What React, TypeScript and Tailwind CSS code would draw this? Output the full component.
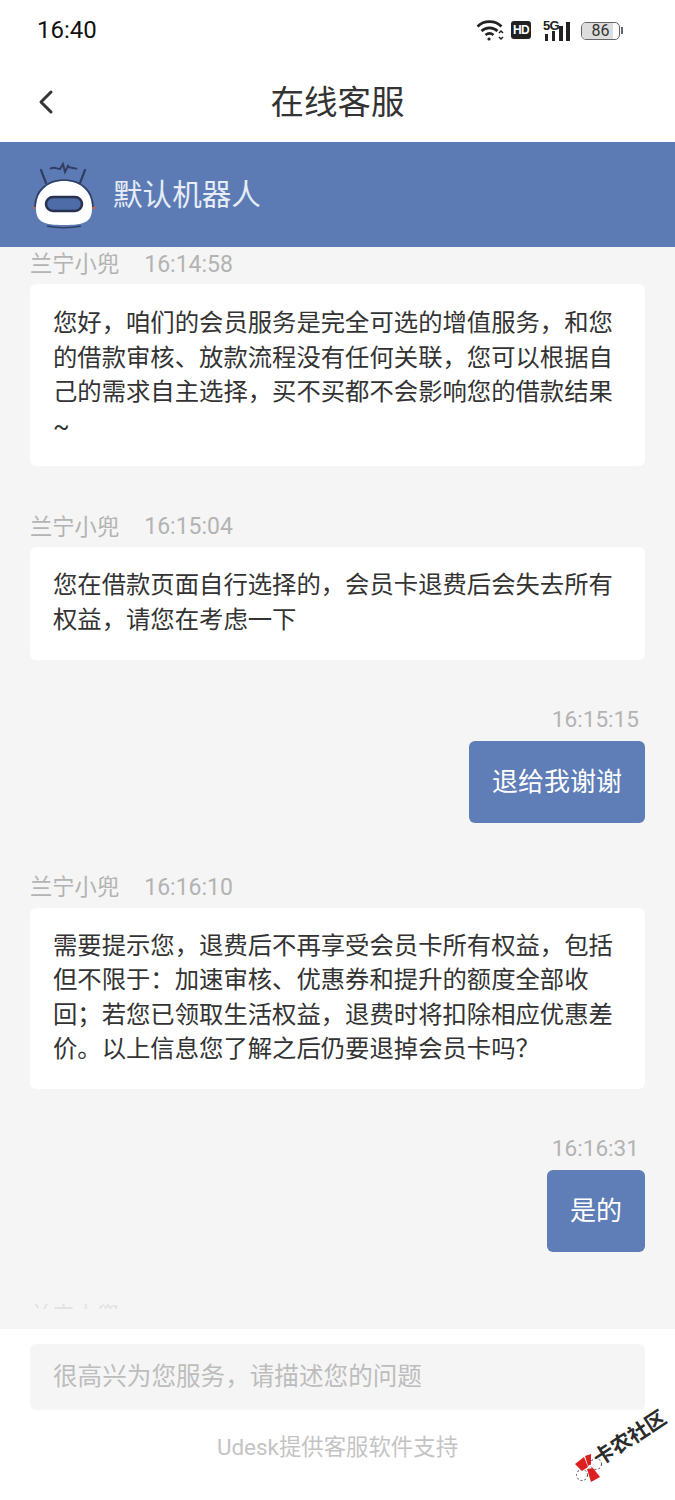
import { ChevronLeft } from "lucide-react";

const CJK = "font-['Roboto','Noto_Sans_CJK_SC',sans-serif]";

const BotAvatar = () => (
  <svg width="66" height="70" viewBox="0 0 66 70" fill="none">
    <path d="M10 10 L15 23 M54 10 L49 23" stroke="#2f3f63" strokeWidth="2.2" strokeLinecap="round" />
    <path d="M19 9 C23 6 26 9 29 9 L32 4 L34 12 L37 6 C39 9 43 7 46 9" stroke="#2f3f63" strokeWidth="2" />
    <rect x="1" y="46" width="5" height="3" fill="#8c6f80" />
    <rect x="60" y="46" width="5" height="3" fill="#a86a70" />
    <path d="M5 48 C5 31 17 21 33 21 C49 21 61 31 61 48 C61 62 54 65 33 65 C12 65 5 62 5 48 Z" fill="#fff" />
    <path d="M4 47 C4 30 17 20 33 20 C49 20 62 30 62 47" stroke="#2f3f63" strokeWidth="1.6" />
    <path d="M16 66 C26 68 40 68 50 66" stroke="#2f3f63" strokeWidth="1.6" />
    <rect x="15" y="37" width="36" height="14" rx="7" fill="#4d6ca8" stroke="#26324f" strokeWidth="2.5" />
  </svg>
);

const WifiIcon = () => (
  <svg width="28" height="24" viewBox="0 0 28 24" fill="none" stroke="#222" strokeWidth="2.6">
    <path d="M1.5 8.5 C8 2 19 2 25.5 8.5" />
    <path d="M5.5 13 C10 8.8 17 8.8 21.5 13" />
    <path d="M9.5 17 C12 15 15 15 17.5 17" />
    <circle cx="13" cy="21" r="1.6" fill="#222" stroke="none" />
    <path d="M23 15 L25 13 L27 15 M23 19 L25 21 L27 19" strokeWidth="1.5" />
  </svg>
);

const StatusBar = () => (
  <div className="flex h-[60px] items-center justify-between pl-[37px] pr-[52px] bg-white">
    <span className="text-[24px] leading-none text-[#111] font-['Roboto',sans-serif]">16:40</span>
    <div className="flex items-center">
      <WifiIcon />
      <span className="ml-[7px] flex h-[18px] w-[20px] items-center justify-center rounded-[3px] bg-[#222] text-[12px] font-bold leading-none tracking-tighter text-white font-['Liberation_Sans',sans-serif]">
        HD
      </span>
      <div className="relative ml-[12px] mt-[1px] flex h-[20px] w-[29px] items-end gap-[3.5px] pl-[1.5px]">
        <span className="absolute left-0 top-[-2px] text-[13px] font-bold leading-none tracking-tighter text-[#222] font-['Liberation_Sans',sans-serif]">5G</span>
        <i className="block h-[7px] w-[3.5px] bg-[#222]" />
        <i className="block h-[10px] w-[3.5px] bg-[#222]" />
        <i className="block h-[15px] w-[4px] bg-[#222]" />
        <i className="block h-[19px] w-[4px] bg-[#222]" />
      </div>
      <div className="ml-[9px] mt-[1px] flex items-center">
        <div className="relative flex h-[18px] w-[39px] items-center justify-center overflow-hidden rounded-[5px] border-[1.5px] border-[#666]">
          <div className="absolute inset-y-0 left-0 w-[31px] bg-[#ddd]" />
          <span className="relative text-[16px] leading-none text-[#333] font-['Roboto',sans-serif]">86</span>
        </div>
        <i className="ml-[1px] block h-[7px] w-[2px] bg-[#666]" />
      </div>
    </div>
  </div>
);

const Incoming = ({ time, lines, mt, first }: { time: string; lines: string[]; mt: string; first?: boolean }) => (
  <div className={mt}>
    <div className="flex h-[24px] items-center pt-[1px] text-[22.3px] leading-none text-[#b3b3b3]">
      <span>兰宁小兜</span>
      <span className="ml-[25px] text-[23px]">{time}</span>
    </div>
    <div
      className={`rounded-[6px] bg-white pl-[23px] pb-[22px] text-[24.35px] leading-[34.6px] text-[#333] ${
        first ? "mt-[8px] pt-[22px]" : "mt-[9px] pt-[21px]"
      }`}
    >
      {lines.map((l) => (
        <div key={l} className="whitespace-nowrap">{l}</div>
      ))}
    </div>
  </div>
);

const Outgoing = ({ time, text, w, mt }: { time: string; text: string; w: string; mt: string }) => (
  <div className={`flex flex-col items-end ${mt}`}>
    <div className="flex h-[24px] items-center pt-[1px] pr-[6px] text-[22.6px] leading-none text-[#b3b3b3]">{time}</div>
    <div className={`mt-[9px] flex h-[82px] items-center justify-center rounded-[6px] bg-[#5f7db7] pt-[2px] text-[26px] text-white ${w}`}>
      {text}
    </div>
  </div>
);

export default function App() {
  return (
    <div className={`relative flex h-[1500px] w-[675px] flex-col overflow-hidden bg-white ${CJK}`}>
      <StatusBar />

      <div className="relative flex h-[82px] items-center justify-center bg-white pt-[5px]">
        <ChevronLeft size={40} strokeWidth={1.8} className="absolute left-[26px] top-[22px] text-[#333]" />
        <span className="text-[33.5px] text-[#333]">在线客服</span>
      </div>

      <div className="flex h-[105px] items-center bg-[#5c7bb5] pl-[31px]">
        <BotAvatar />
        <span className="ml-[16px] pt-[2px] text-[29.6px] text-[#e6edf7]">默认机器人</span>
      </div>

      <div className="h-[1082px] overflow-hidden bg-[#f5f5f5] px-[30px] pt-[5px]">
        <Incoming
          first
          mt=""
          time="16:14:58"
          lines={[
            "您好，咱们的会员服务是完全可选的增值服务，和您",
            "的借款审核、放款流程没有任何关联，您可以根据自",
            "己的需求自主选择，买不买都不会影响您的借款结果",
            "~",
          ]}
        />
        <Incoming
          mt="mt-[48px]"
          time="16:15:04"
          lines={["您在借款页面自行选择的，会员卡退费后会失去所有", "权益，请您在考虑一下"]}
        />
        <Outgoing mt="mt-[48px]" time="16:15:15" text="退给我谢谢" w="w-[176px]" />
        <Incoming
          mt="mt-[52px]"
          time="16:16:10"
          lines={[
            "需要提示您，退费后不再享受会员卡所有权益，包括",
            "但不限于：加速审核、优惠券和提升的额度全部收",
            "回；若您已领取生活权益，退费时将扣除相应优惠差",
            "价。以上信息您了解之后仍要退掉会员卡吗？",
          ]}
        />
        <Outgoing mt="mt-[48px]" time="16:16:31" text="是的" w="w-[98px]" />
        <div className="mt-[52px] h-[5px] overflow-hidden text-[22.3px] leading-[22px] text-[#e2e2e2]">兰宁小兜</div>
      </div>

      <div className="flex flex-1 flex-col items-center bg-white px-[30px] pt-[15px]">
        <div className="flex h-[66px] w-full items-center rounded-[6px] bg-[#f5f5f5] pl-[23px] text-[24.6px] text-[#bdbdbd]">
          很高兴为您服务，请描述您的问题
        </div>
        <div className="mt-[25px] text-[22.4px] leading-[24px] text-[#c4c4c4]">Udesk提供客服软件支持</div>
      </div>

      {/* watermark */}
      <svg width="30" height="30" viewBox="0 0 30 30" className="absolute left-[573px] top-[1453px]">
        <circle cx="9" cy="22" r="5.5" fill="#fff" stroke="#444" strokeWidth="1" strokeDasharray="2 2" />
        <circle cx="23" cy="11" r="5.5" fill="#fff" stroke="#444" strokeWidth="1" strokeDasharray="2 2" />
        <path d="M2 11 L11 4 L15 14 L9 18 Z M12 3 L18 1 L18 11 L15 13 Z" fill="#dc2020" />
        <path d="M14 16 L20 15 L27 24 L18 29 Z" fill="#dc2020" />
      </svg>
      <span className="absolute left-[589px] top-[1428px] -rotate-[33deg] whitespace-nowrap text-[20.5px] font-bold leading-none text-[#2b2b2b]">
        卡农社区
      </span>
    </div>
  );
}
